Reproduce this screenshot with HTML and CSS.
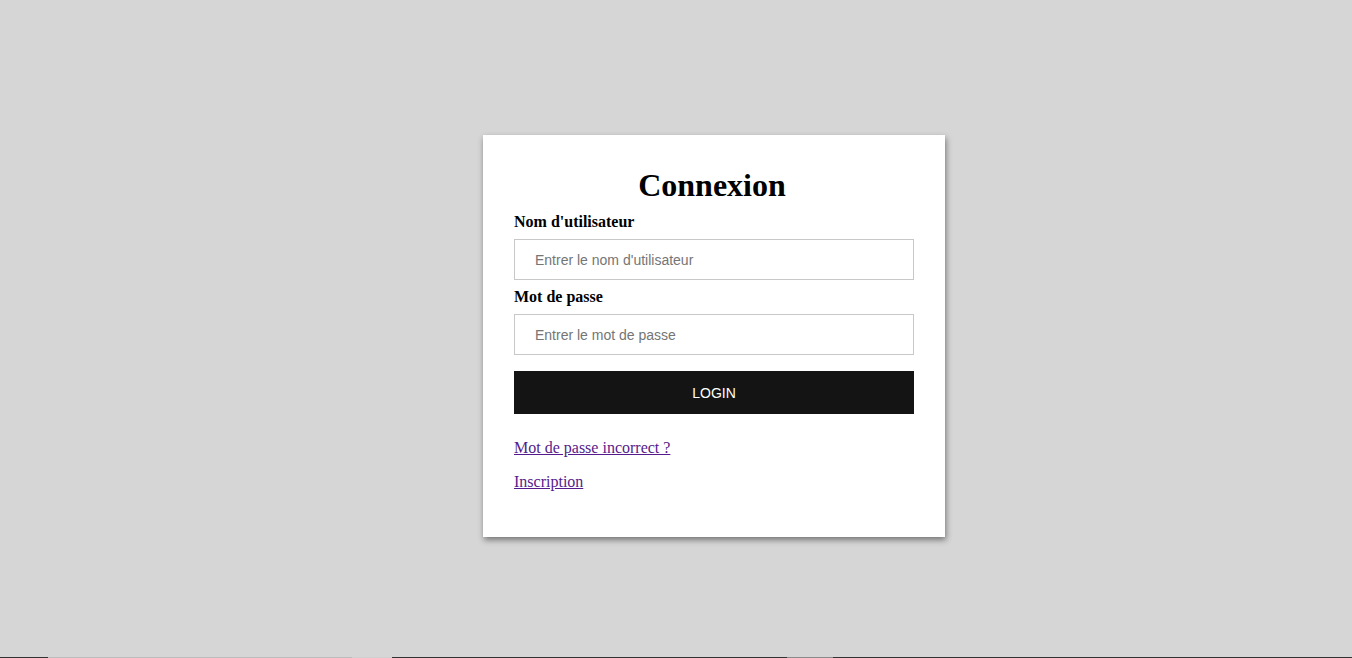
FILE: index.html
```html
<!DOCTYPE html>
<html lang="fr">
<head>
<meta charset="utf-8">
<title>Connexion</title>
<link rel="stylesheet" href="styles.css">
</head>
<body>
<main class="page">
  <form class="card">
    <h1 class="title">Connexion</h1>
    <label class="label" for="user">Nom d'utilisateur</label>
    <input class="field" id="user" type="text" placeholder="Entrer le nom d'utilisateur">
    <label class="label" for="pass">Mot de passe</label>
    <input class="field" id="pass" type="password" placeholder="Entrer le mot de passe">
    <button class="btn" type="button">LOGIN</button>
    <p class="link-row"><a class="link" href="#">Mot de passe incorrect ?</a></p>
    <p class="link-row"><a class="link" href="#">Inscription</a></p>
  </form>
</main>
<div class="taskbar">
  <span class="seg seg-dark" style="width:48px"></span>
  <span class="seg seg-mid" style="width:304px"></span>
  <span class="seg seg-light" style="width:40px"></span>
  <span class="seg seg-dark" style="width:395px"></span>
  <span class="seg seg-mid2" style="width:46px"></span>
  <span class="seg seg-dark" style="flex:1"></span>
</div>
</body>
</html>
```
FILE: styles.css
```css
html, body {
  margin: 0;
  padding: 0;
}
body {
  background: #d6d6d6;
  font-family: "Liberation Serif", "Times New Roman", serif;
  height: 658px;
  overflow: hidden;
  display: flex;
  flex-direction: column;
}
.page {
  flex: 1;
  display: flex;
  justify-content: center;
  align-items: flex-start;
  padding-top: 135px;
  padding-left: 76px;
}
.card {
  width: 400px;
  padding: 32px 31px 46px;
  background: #fff;
  box-shadow: 1px 3px 6px rgba(0, 0, 0, 0.45);
  display: flex;
  flex-direction: column;
}
.title {
  margin: 0 0 9px;
  padding-right: 4px;
  font-size: 32px;
  font-weight: bold;
  text-align: center;
  color: #000;
}
.label {
  display: block;
  font-size: 16px;
  font-weight: bold;
  color: #000;
  margin-bottom: 8px;
}
.field {
  box-sizing: border-box;
  width: 100%;
  height: 41px;
  margin: 0 0 8px;
  padding: 0 20px;
  border: 1px solid #c8c8c8;
  font-family: "Liberation Sans", Arial, sans-serif;
  font-size: 14px;
  color: #000;
  outline: none;
}
.field::placeholder {
  color: #757575;
}
.btn {
  margin: 8px 0 9px;
  height: 43px;
  width: 100%;
  border: none;
  background: #141414;
  color: #fff;
  font-family: "Liberation Sans", Arial, sans-serif;
  font-size: 14px;
  cursor: pointer;
}
.link-row {
  margin: 16px 0 0;
  font-size: 16px;
}
.link {
  color: #551a8b;
}
.taskbar {
  height: 1px;
  display: flex;
}
.seg {
  display: block;
  height: 1px;
}
.seg-dark { background: #333; }
.seg-mid { background: #bdbdbd; }
.seg-light { background: #d0d0d0; }
.seg-mid2 { background: #8a8a8a; }
```
